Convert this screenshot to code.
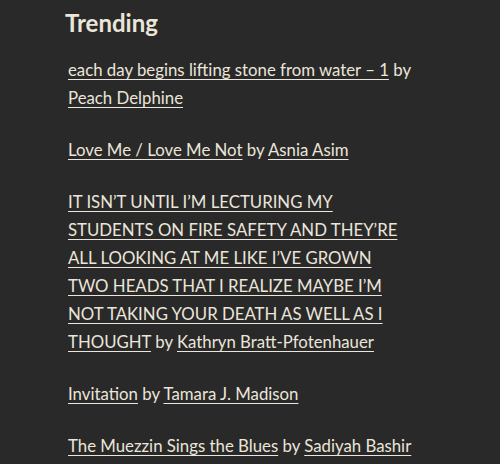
import React from 'react';

interface Item {
    title: string;
    author: string;
}

const items: Item[] = [
    { title: 'each day begins lifting stone from water – 1', author: 'Peach Delphine' },
    { title: 'Love Me / Love Me Not', author: 'Asnia Asim' },
    {
        title: 'IT ISN’T UNTIL I’M LECTURING MY STUDENTS ON FIRE SAFETY AND THEY’RE ALL LOOKING AT ME LIKE I’VE GROWN TWO HEADS THAT I REALIZE MAYBE I’M NOT TAKING YOUR DEATH AS WELL AS I THOUGHT',
        author: 'Kathryn Bratt-Pfotenhauer',
    },
    { title: 'Invitation', author: 'Tamara J. Madison' },
    { title: 'The Muezzin Sings the Blues', author: 'Sadiyah Bashir' },
];

export default function App() {
    return (
        <div className="w-[500px] h-[464px] overflow-hidden bg-[#292929] text-[#ebe5da] font-['Lato',sans-serif]">
            <section className="pl-[65px] pt-[7px]">
                <h2 className="text-[24px] font-bold leading-[32px] mb-[17px]">Trending</h2>
                <ul className="pl-[3px] w-[348px] space-y-[24px]">
                    {items.map((item) => (
                        <li key={item.title} className="text-[16.8px] leading-[28px]">
                            <a href="#" className="underline underline-offset-[3px] decoration-1">{item.title}</a>
                            {' by '}
                            <a href="#" className="underline underline-offset-[3px] decoration-1">{item.author}</a>
                        </li>
                    ))}
                </ul>
            </section>
        </div>
    );
}
